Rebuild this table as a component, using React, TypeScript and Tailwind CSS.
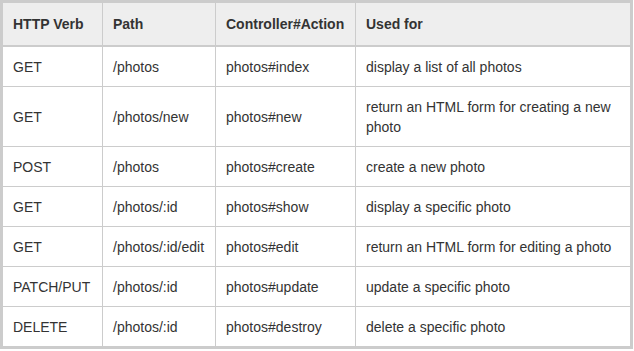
const headers = ["HTTP Verb", "Path", "Controller#Action", "Used for"];

const rows: [string, string, string, string][] = [
  ["GET", "/photos", "photos#index", "display a list of all photos"],
  ["GET", "/photos/new", "photos#new", "return an HTML form for creating a new photo"],
  ["POST", "/photos", "photos#create", "create a new photo"],
  ["GET", "/photos/:id", "photos#show", "display a specific photo"],
  ["GET", "/photos/:id/edit", "photos#edit", "return an HTML form for editing a photo"],
  ["PATCH/PUT", "/photos/:id", "photos#update", "update a specific photo"],
  ["DELETE", "/photos/:id", "photos#destroy", "delete a specific photo"],
];

export default function App() {
  return (
    <div
      className="min-h-screen bg-white text-[14px] text-[#333333]"
      style={{ fontFamily: '"Liberation Sans", Arial, sans-serif' }}
    >
      <div className="w-[633px] border-[3px] border-[#cccccc]">
        <div className="grid grid-cols-[100px_113px_140px_274px]">
          {/* header */}
          {headers.map((h, i) => (
            <div
              key={h}
              className={`bg-[#eeeeee] px-[10px] pt-[11px] pb-[11px] leading-[20px] font-bold border-b-2 border-[#cccccc] ${
                i < 3 ? "border-r" : ""
              }`}
            >
              {h}
            </div>
          ))}

          {/* body */}
          {rows.map((row, r) =>
            row.map((cell, i) => (
              <div
                key={`${r}-${i}`}
                className={`flex items-center px-[10px] pt-[10px] pb-[9px] leading-[20px] border-[#cccccc] ${
                  i < 3 ? "border-r" : ""
                } ${r < rows.length - 1 ? "border-b" : ""}`}
              >
                <span>{cell}</span>
              </div>
            ))
          )}
        </div>
      </div>
    </div>
  );
}
